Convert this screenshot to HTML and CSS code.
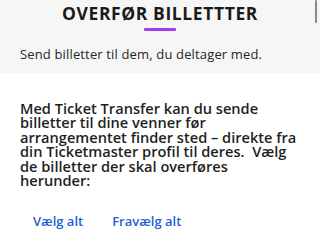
FILE: index.html
```html
<!DOCTYPE html>
<html lang="da">
<head>
<meta charset="utf-8">
<link rel="stylesheet" href="styles.css">
</head>
<body>
<header class="top">
  <h1 class="title">OVERFØR BILLETTTER</h1>
  <div class="bar"></div>
  <p class="sub">Send billetter til dem, du deltager med.</p>
  <div class="scroll"></div>
</header>
<main class="content">
  <p class="intro">Med Ticket Transfer kan du sende billetter til dine venner før arrangementet finder sted – direkte fra din Ticketmaster profil til deres.&nbsp; Vælg de billetter der skal overføres herunder:</p>
  <div class="links">
    <a class="link">Vælg alt</a>
    <a class="link">Fravælg alt</a>
  </div>
</main>
</body>
</html>
```
FILE: styles.css
```css
html, body {
  margin: 0;
  padding: 0;
  width: 320px;
  height: 240px;
  overflow: hidden;
  background: #ffffff;
  font-family: "Open Sans", "Liberation Sans", sans-serif;
  color: #1f1f1f;
}
.top {
  position: relative;
  background: #f6f6f6;
  height: 73px;
  display: flex;
  flex-direction: column;
  align-items: center;
}
.title {
  margin: 3px 0 0;
  font-size: 17.5px;
  font-weight: 700;
  line-height: 20px;
  letter-spacing: 0.6px;
  color: #1a1a1a;
}
.bar {
  width: 32px;
  height: 3px;
  background: #a33be6;
  border-radius: 1px;
  margin-top: 5px;
}
.sub {
  align-self: flex-start;
  margin: 15px 0 0 20px;
  font-size: 13px;
  line-height: 16px;
  letter-spacing: 0.15px;
  color: #262626;
}
.scroll {
  position: absolute;
  right: 3px;
  top: 0;
  width: 2px;
  height: 23px;
  background: #8a8a8a;
  border-radius: 1px;
}
.content {
  padding: 28px 20px 0;
}
.intro {
  margin: 0;
  font-size: 14.6px;
  font-weight: 600;
  line-height: 14.4px;
  color: #1f1f1f;
}
.links {
  display: flex;
  gap: 29px;
  padding: 25px 0 0 13px;
}
.link {
  font-size: 13px;
  font-weight: 600;
  color: #1f5fd6;
}
```
